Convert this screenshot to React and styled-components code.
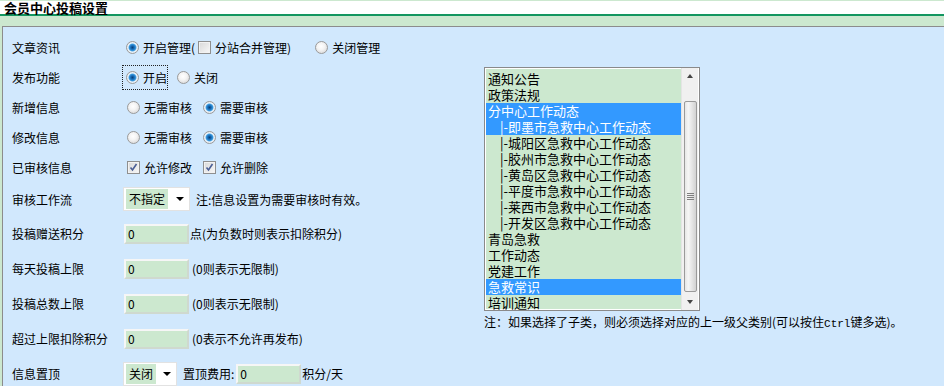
import React from 'react';
import styled, { createGlobalStyle, css } from 'styled-components';

const Global = createGlobalStyle`
  html, body { margin: 0; padding: 0; }
  body {
    background: #cce8cf;
    font-family: "Noto Sans CJK SC", "Noto Sans", sans-serif;
    font-size: 12px;
    color: #000;
    width: 944px;
    height: 386px;
    overflow: hidden;
  }
`;

const Page = styled.div`
  padding-top: 1px;
  height: 385px;
  display: flex;
  flex-direction: column;
`;

const TitleBar = styled.div`
  background: #fff;
  height: 13px;
  border-bottom: 2px solid #139660;
  padding-left: 4px;
  font-size: 13px;
  font-weight: bold;
  line-height: 14px;
  white-space: nowrap;
`;

const Gap = styled.div`
  height: 10px;
`;

const Panel = styled.div`
  flex: 1;
  margin-left: 2px;
  border-top: 1px solid #8c8c8c;
  border-left: 1px solid #8c8c8c;
  background: #d1e8fd;
  display: flex;
  overflow: hidden;
`;

const Form = styled.div`
  width: 480px;
  padding: 5px 0 0 9px;
`;

const Row = styled.div`
  height: ${p => p.h}px;
  display: flex;
  align-items: center;
`;

const Label = styled.div`
  width: 111px;
  flex-shrink: 0;
`;

const Controls = styled.div`
  display: flex;
  align-items: center;
  white-space: nowrap;
`;

const Option = styled.label`
  display: flex;
  align-items: center;
  gap: 4px;
  margin-right: ${p => p.mr ?? 10}px;
  ${p => p.focus && css`
    outline: 1px dotted #222;
    outline-offset: 0;
  `}
`;

const RadioDot = styled.span`
  width: 11px;
  height: 11px;
  border-radius: 50%;
  border: 1px solid #9a9a9a;
  background: radial-gradient(circle at 45% 40%, #ffffff 0, #f4f4f4 40%, #cfcfcf 100%);
  flex-shrink: 0;
  ${p => p.on && css`
    background: radial-gradient(circle at 50% 50%, #0a3f73 0, #1565b0 1.6px, #3a9be0 3.4px, #eaf3fb 4.4px, #dcdcdc 100%);
  `}
`;

const Box = styled.span`
  width: 11px;
  height: 11px;
  border: 1px solid #8f8f8f;
  background: linear-gradient(135deg, #d8d8d8, #f8f8f8);
  box-shadow: inset 0 0 0 1px #f2f2f2;
  flex-shrink: 0;
  display: flex;
  align-items: center;
  justify-content: center;
`;

const Note = styled.span`
  margin-left: ${p => p.ml ?? 6}px;
`;

const Input = styled.div`
  width: 59px;
  height: 16px;
  border: 2px solid;
  border-color: #f6f6f6 #cfd9cf #cfd9cf #f6f6f6;
  background: #cce8cf;
  padding-left: 2px;
  line-height: 16px;
  flex-shrink: 0;
`;

const Select = styled.div`
  width: ${p => p.w}px;
  height: 22px;
  border: 1px solid #e2e2e2;
  background: #fff;
  display: flex;
  align-items: center;
  padding: 0 2px;
  box-sizing: content-box;
  flex-shrink: 0;
`;

const SelValue = styled.span`
  background: #cce8cf;
  padding: 0 3px;
  line-height: 20px;
  height: 20px;
`;

const Arrow = styled.span`
  margin-left: auto;
  margin-right: 3px;
  width: 0;
  height: 0;
  border-left: 4px solid transparent;
  border-right: 4px solid transparent;
  border-top: 4px solid #000;
`;

const Side = styled.div`
  padding: 40px 0 0 0;
  margin-left: -8px;
`;

const ListBox = styled.div`
  width: 212px;
  height: 242px;
  border: 1px solid #8a8a8a;
  background: #fff;
  padding: 0 1px;
  display: flex;
  align-items: stretch;
`;

const Items = styled.div`
  flex: 1;
  background: #cce8cf;
  padding-top: 2px;
  margin: 1px 0;
`;

const Item = styled.div`
  height: 16px;
  line-height: 16px;
  font-size: 13px;
  padding-left: ${p => (p.sub ? 14 : 2)}px;
  white-space: nowrap;
  ${p => p.sel && css`
    background: #3399ff;
    color: #fff;
  `}
`;

const Scroll = styled.div`
  width: 16px;
  background: #f0f0f0;
  border-left: 1px solid #e4e4e4;
  display: flex;
  flex-direction: column;
  align-items: center;
`;

const ScrollBtn = styled.div`
  height: 16px;
  width: 16px;
  display: flex;
  align-items: center;
  justify-content: center;
  &::after {
    content: '';
    border-left: 3.5px solid transparent;
    border-right: 3.5px solid transparent;
    ${p => (p.down ? 'border-top' : 'border-bottom')}: 4px solid #444;
  }
`;

const Thumb = styled.div`
  margin-top: ${p => p.top}px;
  flex: 1;
  width: 13px;
  border: 1px solid #9a9a9a;
  border-radius: 2px;
  background: linear-gradient(90deg, #e6e6e6, #f6f6f6 30%, #d2d2d2);
  box-sizing: border-box;
  display: flex;
  align-items: center;
  justify-content: center;
  margin-bottom: 2px;
`;

const Grip = styled.div`
  width: 7px;
  height: 7px;
  background: repeating-linear-gradient(180deg, #7f7f7f 0 1px, transparent 1px 2px);
`;

const Hint = styled.div`
  margin-top: 2px;
  white-space: nowrap;
`;

const Mono = styled.span`
  font-family: "Liberation Mono", "DejaVu Sans Mono", monospace;
  font-size: 11px;
`;

const Radio = ({ on, children, mr, focus }) => (
  <Option mr={mr} focus={focus}>
    <RadioDot on={on} />
    {children}
  </Option>
);

const Check = ({ on, children, mr }) => (
  <Option mr={mr}>
    <Box>
      {on && (
        <svg width="9" height="9" viewBox="0 0 9 9">
          <path d="M1.5 4.5 L3.5 7 L7.5 1" fill="none" stroke="#4a5e95" strokeWidth="1.6" />
        </svg>
      )}
    </Box>
    {children}
  </Option>
);

const columns = [
  { t: '通知公告' },
  { t: '政策法规' },
  { t: '分中心工作动态', sel: true },
  { t: '|-即墨市急救中心工作动态', sub: true, sel: true },
  { t: '|-城阳区急救中心工作动态', sub: true },
  { t: '|-胶州市急救中心工作动态', sub: true },
  { t: '|-黄岛区急救中心工作动态', sub: true },
  { t: '|-平度市急救中心工作动态', sub: true },
  { t: '|-莱西市急救中心工作动态', sub: true },
  { t: '|-开发区急救中心工作动态', sub: true },
  { t: '青岛急救' },
  { t: '工作动态' },
  { t: '党建工作' },
  { t: '急救常识', sel: true },
  { t: '培训通知' },
];

const App = () => {
  return (
    <Page>
      <Global />
      <TitleBar>会员中心投稿设置</TitleBar>
      <Gap />
      <Panel>
        <Form>
          <Row h={30}>
            <Label>文章资讯</Label>
            <Controls style={{ marginLeft: 3 }}>
              <Radio on mr={3}>开启管理(</Radio>
              <Check mr={24}>分站合并管理)</Check>
              <Radio>关闭管理</Radio>
            </Controls>
          </Row>
          <Row h={30}>
            <Label>发布功能</Label>
            <Controls>
              <Option mr={10} focus style={{ padding: '3px 0 3px 3px', gap: 0 }}>
                <RadioDot on />
                <span style={{ marginLeft: 4 }}>开启</span>
              </Option>
              <Radio>关闭</Radio>
            </Controls>
          </Row>
          <Row h={30}>
            <Label>新增信息</Label>
            <Controls style={{ marginLeft: 4 }}>
              <Radio mr={11}>无需审核</Radio>
              <Radio on>需要审核</Radio>
            </Controls>
          </Row>
          <Row h={30}>
            <Label>修改信息</Label>
            <Controls style={{ marginLeft: 4 }}>
              <Radio mr={11}>无需审核</Radio>
              <Radio on>需要审核</Radio>
            </Controls>
          </Row>
          <Row h={30}>
            <Label>已审核信息</Label>
            <Controls style={{ marginLeft: 4 }}>
              <Check on mr={11}>允许修改</Check>
              <Check on>允许删除</Check>
            </Controls>
          </Row>
          <Row h={34}>
            <Label>审核工作流</Label>
            <Controls>
              <Select w={61}>
                <SelValue>不指定</SelValue>
                <Arrow />
              </Select>
              <Note>注:信息设置为需要审核时有效。</Note>
            </Controls>
          </Row>
          <Row h={35}>
            <Label>投稿赠送积分</Label>
            <Controls style={{ marginLeft: 1 }}>
              <Input>0</Input>
              <Note ml={1}>点(为负数时则表示扣除积分)</Note>
            </Controls>
          </Row>
          <Row h={35}>
            <Label>每天投稿上限</Label>
            <Controls style={{ marginLeft: 1 }}>
              <Input>0</Input>
              <Note ml={3}>(0则表示无限制)</Note>
            </Controls>
          </Row>
          <Row h={35}>
            <Label>投稿总数上限</Label>
            <Controls style={{ marginLeft: 1 }}>
              <Input>0</Input>
              <Note ml={3}>(0则表示无限制)</Note>
            </Controls>
          </Row>
          <Row h={35}>
            <Label>超过上限扣除积分</Label>
            <Controls style={{ marginLeft: 1 }}>
              <Input>0</Input>
              <Note ml={3}>(0表示不允许再发布)</Note>
            </Controls>
          </Row>
          <Row h={35}>
            <Label>信息置顶</Label>
            <Controls>
              <Select w={48}>
                <SelValue>关闭</SelValue>
                <Arrow />
              </Select>
              <Note ml={6}>置顶费用:</Note>
              <Input style={{ marginLeft: 2 }}>0</Input>
              <Note ml={1}>积分/天</Note>
            </Controls>
          </Row>
        </Form>
        <Side>
          <ListBox>
            <Items>
              {columns.map(c => (
                <Item key={c.t} sub={c.sub} sel={c.sel}>{c.t}</Item>
              ))}
            </Items>
            <Scroll>
              <ScrollBtn />
              <Thumb top={17}>
                <Grip />
              </Thumb>
              <ScrollBtn down />
            </Scroll>
          </ListBox>
          <Hint>注：如果选择了子类，则必须选择对应的上一级父类别(可以按住<Mono>Ctrl</Mono>键多选)。</Hint>
        </Side>
      </Panel>
    </Page>
  );
};

export default App;
